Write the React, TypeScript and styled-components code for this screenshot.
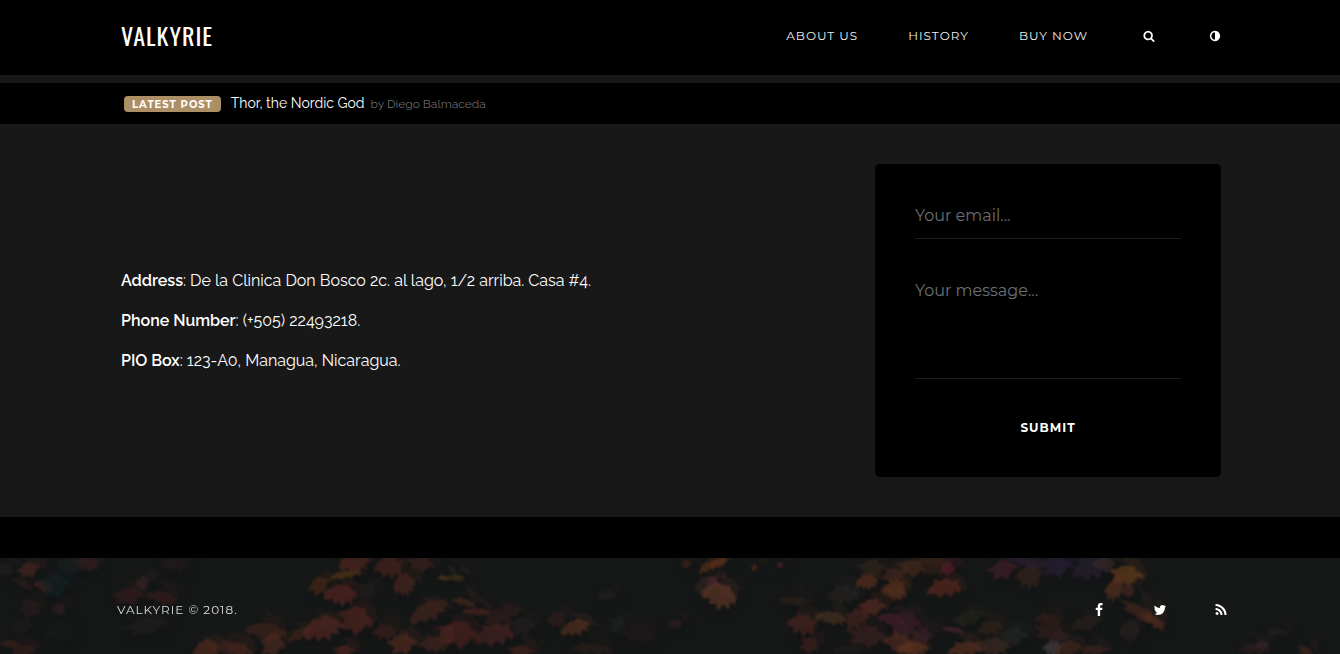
import React from "react";
import styled, { createGlobalStyle } from "styled-components";

const sans = `Montserrat, Inter, "Open Sans", sans-serif`;
const text = `Raleway, Lato, "Open Sans", sans-serif`;
const display = `Oswald, "Liberation Sans Narrow", sans-serif`;

const GlobalStyle = createGlobalStyle`
  *, *::before, *::after { box-sizing: border-box; }
  body {
    margin: 0;
    background: #181818;
    color: #fff;
    font-family: ${text};
    font-size: 16px;
    line-height: 24px;
    -webkit-font-smoothing: antialiased;
  }
  a { color: inherit; text-decoration: none; }
`;

const Header = styled.header`
  display: flex;
  align-items: center;
  justify-content: space-between;
  min-height: 75px;
  padding: 0 114px 4px 121px;
  background: #000;
`;

const Brand = styled.a`
  padding-bottom: 2px;
  font-family: ${display};
  font-size: 24px;
  line-height: 36px;
  letter-spacing: 1px;
`;

const Nav = styled.nav`
  display: flex;
  align-items: center;
  gap: 50px;
`;

const NavLink = styled.a`
  font-family: ${sans};
  font-size: 12px;
  line-height: 20px;
  letter-spacing: 1px;
  color: #eee;
`;

const Tools = styled.div`
  display: flex;
  gap: 44px;
`;

const IconButton = styled.button`
  display: flex;
  padding: 0 5px;
  border: 0;
  background: none;
  color: #fff;
  cursor: pointer;
`;

const IconLink = styled.a`
  display: flex;
`;

const LatestBar = styled.section`
  display: flex;
  align-items: center;
  min-height: 41px;
  margin-top: 8px;
  padding: 0 119px 0 124px;
  background: #000;
`;

const Badge = styled.span`
  margin-right: 10px;
  padding: 2px 8px 0;
  border-radius: 4px;
  background: #ad8f66;
  font-family: ${sans};
  font-size: 10px;
  font-weight: 700;
  line-height: 14px;
  letter-spacing: 1px;
`;

const PostLink = styled.a`
  padding-bottom: 2px;
  font-size: 14px;
  line-height: 20px;
`;

const Byline = styled.span`
  margin-left: 6px;
  font-size: 12px;
  line-height: 20px;
  color: #6a6a6a;
`;

const Main = styled.main`
  display: flex;
  align-items: center;
  justify-content: space-between;
  gap: 40px;
  padding: 40px 119px 40px 121px;
`;

const Contact = styled.address`
  display: flex;
  flex-direction: column;
  gap: 16px;
  font-style: normal;
`;

const Line = styled.p`
  margin: 0;
  strong { font-weight: 600; }
`;

const Card = styled.form`
  display: flex;
  flex-direction: column;
  gap: 40px;
  flex: 0 0 346px;
  padding: 40px;
  border-radius: 5px;
  background: #000;
`;

const Field = styled.input`
  display: block;
  width: 100%;
  height: 35px;
  padding: 0 0 12px;
  border: 0;
  border-bottom: 1px solid #1e1e1e;
  border-radius: 0;
  outline: 0;
  background: none;
  color: #fff;
  font: 400 16px/24px ${sans};
  resize: none;
  &::placeholder { color: #6c6f73; opacity: 1; }
`;

const MessageField = styled(Field)`
  height: 100px;
`;

const Submit = styled.button`
  align-self: center;
  padding: 0;
  border: 0;
  background: none;
  color: #fff;
  font: 700 12px/18px ${sans};
  letter-spacing: 1px;
  cursor: pointer;
`;

const Divider = styled.div`
  height: 41px;
  background: #000;
`;

const Footer = styled.footer`
  position: relative;
  display: flex;
  align-items: center;
  justify-content: space-between;
  padding: 42px 112px 34px 117px;
  background: #161818;
  overflow: hidden;
`;

const Backdrop = styled.svg`
  position: absolute;
  inset: 0;
  width: 100%;
  height: 100%;
`;

const Copyright = styled.small`
  position: relative;
  font-family: ${sans};
  font-size: 12px;
  line-height: 20px;
  letter-spacing: 1px;
  color: #ddd;
`;

const Social = styled.div`
  position: relative;
  display: flex;
  align-items: center;
  gap: 47px;
`;

const icons = {
  search:
    "M1216 832q0-185-131.5-316.5t-316.5-131.5-316.5 131.5-131.5 316.5 131.5 316.5 316.5 131.5 316.5-131.5 131.5-316.5zm512 832q0 52-38 90t-90 38q-54 0-90-38l-343-342q-179 124-399 124-143 0-273.5-55.5t-225-150-150-225-55.5-273.5 55.5-273.5 150-225 225-150 273.5-55.5 273.5 55.5 225 150 150 225 55.5 273.5q0 220-124 399l343 343q37 37 37 90z",
  adjust:
    "M896 1440v-1088q-148 0-273 73t-198 198-73 273 73 273 198 198 273 73zm768-544q0 209-103 385.5t-279.5 279.5-385.5 103-385.5-103-279.5-279.5-103-385.5 103-385.5 279.5-279.5 385.5-103 385.5 103 279.5 279.5 103 385.5z",
  facebook:
    "M1343 12v264h-157q-86 0-116 36t-30 108v189h293l-39 296h-254v759h-306v-759h-255v-296h255v-218q0-186 104-288.5t277-102.5q147 0 228 12z",
  twitter:
    "M1684 408q-67 98-162 167 1 14 1 42 0 130-38 259.5t-115.5 248.5-184.5 210.5-258 146-323 54.5q-271 0-496-145 35 4 78 4 225 0 401-138-105-2-188-64.5t-114-159.5q33 5 61 5 43 0 85-11-112-23-185.5-111.5t-73.5-205.5v-4q68 38 146 41-66-44-105-115t-39-154q0-88 44-163 121 149 294.5 238.5t371.5 99.5q-8-38-8-74 0-134 94.5-228.5t228.5-94.5q140 0 236 102 109-21 205-78-37 115-142 178 93-10 186-50z",
  rss: "M576 1344q0 80-56 136t-136 56-136-56-56-136 56-136 136-56 136 56 56 136zm512 123q2 28-17 48-18 21-47 21h-135q-25 0-43-16.5t-20-41.5q-22-229-184.5-391.5t-391.5-184.5q-25-2-41.5-20t-16.5-43v-135q0-29 21-47 17-17 43-17h5q160 13 306 80.5t259 181.5q114 113 181.5 259t80.5 306zm512 2q2 27-18 47-18 20-46 20h-143q-26 0-44.5-17.5t-19.5-42.5q-12-215-101-408.5t-231.5-336-336-231.5-408.5-102q-25-1-42.5-19.5t-17.5-43.5v-143q0-28 20-46 18-18 44-18h3q262 13 501.5 120t425.5 294q187 186 294 425.5t120 501.5z",
};

const Icon = ({ name, size }: { name: keyof typeof icons; size: number }) => (
  <svg width={size} height={size} viewBox="0 0 1792 1792" fill="currentColor" aria-hidden="true">
    <path d={icons[name]} />
  </svg>
);

// Drooping maple leaves: a broad back with lobes of different lengths below
const leafShapes = [
  "M-10 2Q-9-4-5-5Q-3-9 0-7Q4-10 6-5Q10-4 10 2L7 1L8 6L4 4L2 9L0 5L-4 7L-4 3L-8 5Z",
  "M-10-2L-5-4Q-3-8 1-7L4-8L5-4Q9-4 10 1L6 1Q6 5 3 6L3 9L-1 5Q-4 7-7 6L-5 2Z",
  "M-9 4Q-8-2-4-4L-5-8L-1-6Q3-9 5-5L9-6L8-2Q10 1 9 5L6 3L4 8L1 4L-2 8L-4 4Z",
];

// x, y, half width, half height, rotation, colour
const leaves: [number, number, number, number, number, string][] = [
  [4, 12, 9, 7, 20, "#22201e"],
  [28, 12, 11, 8, -15, "#4a2620"],
  [22, 25, 12, 5, 30, "#2a1f1c"],
  [44, 28, 9, 7, 20, "#3f2423"],
  [55, 27, 14, 14, 0, "#142123"],
  [86, 5, 12, 9, 10, "#3a2021"],
  [70, 8, 12, 9, 10, "#1a2020"],
  [30, 50, 11, 10, 40, "#2c1b1c"],
  [58, 51, 7, 7, 10, "#321f1f"],
  [60, 74, 14, 12, 0, "#161d1c"],
  [22, 68, 12, 10, 10, "#1c1c1b"],
  [10, 86, 11, 5, 10, "#3b211c"],
  [24, 93, 11, 6, -10, "#3a1e1b"],
  [128, 38, 16, 9, 0, "#351d1c"],
  [142, 25, 6, 9, 20, "#3d2424"],
  [162, 40, 14, 7, 15, "#371e1d"],
  [145, 68, 22, 9, -10, "#201e1c"],
  [174, 5, 14, 10, 0, "#241a1a"],
  [206, 93, 13, 11, -20, "#552c20"],
  [238, 92, 14, 8, 15, "#50291f"],
  [225, 89, 8, 9, 0, "#41231d"],
  [266, 74, 19, 9, 10, "#40251c"],
  [272, 87, 12, 13, 10, "#4e2a20"],
  [300, 76, 14, 6, -25, "#44241c"],
  [322, 71, 18, 13, -15, "#542721"],
  [355, 62, 17, 15, 15, "#50251f"],
  [384, 74, 12, 9, 10, "#3b201d"],
  [340, 37, 15, 11, 5, "#562621"],
  [319, 28, 11, 9, -30, "#4c2919"],
  [344, 17, 16, 4, -10, "#573818"],
  [354, 5, 14, 11, -10, "#51261f"],
  [366, 34, 10, 11, 30, "#231e1d"],
  [388, 9, 14, 12, 10, "#49241f"],
  [404, 27, 10, 12, -10, "#4c2820"],
  [420, 6, 13, 8, 10, "#3f211e"],
  [443, 20, 6, 3, 10, "#514021"],
  [428, 54, 19, 10, -25, "#44251e"],
  [402, 86, 14, 11, -5, "#552c20"],
  [432, 86, 13, 9, 10, "#442620"],
  [447, 78, 7, 12, 10, "#4a2822"],
  [344, 93, 11, 6, 0, "#53261f"],
  [463, 44, 12, 4, 15, "#4b2c1b"],
  [477, 54, 14, 4, 5, "#4c261f"],
  [458, 76, 20, 14, 10, "#4b2120"],
  [493, 77, 19, 12, -10, "#482322"],
  [503, 57, 17, 8, -20, "#2f1e1d"],
  [523, 68, 12, 10, 5, "#252020"],
  [556, 62, 9, 9, 10, "#351f1f"],
  [575, 70, 14, 8, -15, "#56301f"],
  [521, 93, 13, 6, 5, "#4a241f"],
  [590, 91, 21, 6, 5, "#2a201c"],
  [607, 38, 9, 6, 0, "#252121"],
  [617, 67, 8, 10, 20, "#1e2422"],
  [637, 75, 18, 11, 10, "#211a1a"],
  [456, 20, 8, 4, 5, "#41301b"],
  [686, 6, 5, 5, 0, "#482319"],
  [707, 9, 10, 5, -30, "#593017"],
  [719, 5, 9, 5, -30, "#67331b"],
  [712, 24, 6, 7, 25, "#592d35"],
  [703, 28, 8, 11, 10, "#332421"],
  [719, 38, 16, 13, 20, "#613627"],
  [754, 10, 3, 4, 10, "#5c2719"],
  [780, 7, 3, 4, 10, "#57202a"],
  [676, 66, 6, 5, 0, "#32201e"],
  [794, 43, 17, 5, 5, "#2d211b"],
  [801, 66, 14, 12, 20, "#4b2421"],
  [831, 60, 15, 7, 10, "#4a3020"],
  [809, 87, 9, 9, 30, "#43221f"],
  [843, 36, 16, 11, 0, "#272321"],
  [867, 24, 10, 8, 0, "#5d301e"],
  [871, 10, 14, 9, 0, "#32241c"],
  [892, 17, 10, 8, -10, "#462822"],
  [894, 34, 12, 9, 20, "#52291f"],
  [872, 49, 13, 9, 0, "#5b2b21"],
  [856, 61, 12, 10, -30, "#482521"],
  [892, 62, 13, 7, 15, "#4b1f30"],
  [866, 78, 20, 12, 10, "#392220"],
  [900, 74, 9, 11, 0, "#3a2028"],
  [850, 92, 15, 5, 0, "#231f1d"],
  [911, 10, 14, 9, 10, "#482a1b"],
  [894, 31, 11, 11, 0, "#50301a"],
  [932, 13, 9, 5, -10, "#332119"],
  [947, 10, 8, 7, 15, "#631d30"],
  [943, 30, 17, 10, -5, "#5b291f"],
  [934, 4, 16, 6, 0, "#3b231a"],
  [1002, 12, 14, 10, -10, "#431f29"],
  [1028, 18, 12, 14, 20, "#37241f"],
  [1026, 4, 16, 6, 20, "#2c2033"],
  [1056, 8, 15, 12, 0, "#272038"],
  [1089, 10, 18, 13, -10, "#282032"],
  [1104, 6, 10, 7, 0, "#3b2b24"],
  [1126, 17, 17, 10, 8, "#653d1c"],
  [1114, 30, 8, 15, 20, "#5b321e"],
  [1128, 33, 6, 7, 10, "#4c2723"],
  [1139, 54, 22, 7, 30, "#442720"],
  [1152, 62, 14, 6, 35, "#542e1e"],
  [1130, 73, 9, 12, 10, "#2b2220"],
  [968, 60, 17, 8, -15, "#25241a"],
  [989, 70, 13, 8, -10, "#34251b"],
  [953, 72, 10, 3, 10, "#512531"],
  [905, 65, 15, 13, 10, "#381d27"],
  [899, 85, 16, 10, 20, "#502c20"],
  [912, 91, 15, 8, 0, "#633720"],
  [922, 78, 10, 10, 10, "#3a2028"],
  [964, 91, 17, 8, -5, "#5c3020"],
  [992, 89, 16, 9, 0, "#402a23"],
  [1013, 78, 14, 10, 0, "#232826"],
  [1052, 90, 9, 9, 20, "#4a4242"],
  [1068, 91, 12, 8, -10, "#442820"],
  [1051, 75, 19, 9, 15, "#34201d"],
  [1047, 62, 13, 7, 15, "#331f1c"],
  [1085, 66, 14, 8, -15, "#2a201e"],
  [1093, 92, 16, 5, 0, "#42261e"],
  [1253, 91, 16, 6, 0, "#2d201e"],
  [1262, 87, 6, 5, 0, "#37262a"],
  [1305, 93, 8, 5, 25, "#46251d"],
  [1277, 74, 12, 4, 10, "#26201d"],
];

const Foliage = () => (
  <Backdrop viewBox="0 0 1340 96" preserveAspectRatio="xMidYMin slice" aria-hidden="true">
    <defs>
      <filter id="soft" x="-5%" y="-20%" width="110%" height="140%" colorInterpolationFilters="sRGB">
        <feGaussianBlur stdDeviation="0.8" />
      </filter>
      <filter id="shade" x="-5%" y="-20%" width="110%" height="140%" colorInterpolationFilters="sRGB">
        <feGaussianBlur stdDeviation="5" />
      </filter>
    </defs>
    <g filter="url(#shade)">
      {leaves.map(([x, y, w, h], i) => (
        <ellipse key={i} cx={x + 4} cy={y + 4} rx={w + 3} ry={h + 3} fill="#0f1112" opacity="0.4" />
      ))}
    </g>
    <g filter="url(#soft)">
      {leaves.map(([x, y, w, h, r, fill], i) => (
        <path
          key={`under-${i}`}
          d={leafShapes[(i + 1) % 3]}
          fill={fill}
          opacity="0.22"
          transform={`translate(${x + 9} ${y - 8}) rotate(${r + 40}) scale(${w / 10} ${h / 9})`}
        />
      ))}
      {leaves.map(([x, y, w, h, r, fill], i) => (
        <path
          key={i}
          d={leafShapes[i % 3]}
          fill={fill}
          opacity="0.66"
          transform={`translate(${x} ${y}) rotate(${r}) scale(${w / 9} ${h / 8})`}
        />
      ))}
    </g>
  </Backdrop>
);

export default function App() {
  return (
    <>
      <GlobalStyle />
      <Header>
        <Brand href="#">VALKYRIE</Brand>
        <Nav>
          <NavLink href="#about">ABOUT US</NavLink>
          <NavLink href="#history">HISTORY</NavLink>
          <NavLink href="#buy">BUY NOW</NavLink>
          <Tools>
            <IconButton type="button" aria-label="Search">
              <Icon name="search" size={12} />
            </IconButton>
            <IconButton type="button" aria-label="Toggle contrast">
              <Icon name="adjust" size={12} />
            </IconButton>
          </Tools>
        </Nav>
      </Header>
      <LatestBar>
        <Badge>LATEST POST</Badge>
        <PostLink href="#post">Thor, the Nordic God</PostLink>
        <Byline>by Diego Balmaceda</Byline>
      </LatestBar>
      <Main>
        <Contact>
          <Line><strong>Address</strong>: De la Clinica Don Bosco 2c. al lago, 1/2 arriba. Casa #4.</Line>
          <Line><strong>Phone Number</strong>: (+505) 22493218.</Line>
          <Line><strong>PIO Box</strong>: 123-A0, Managua, Nicaragua.</Line>
        </Contact>
        <Card onSubmit={(e: React.FormEvent) => e.preventDefault()}>
          <Field type="email" placeholder="Your email..." aria-label="Your email" />
          <MessageField as="textarea" placeholder="Your message..." aria-label="Your message" />
          <Submit type="submit">SUBMIT</Submit>
        </Card>
      </Main>
      <Divider />
      <Footer>
        <Foliage />
        <Copyright>VALKYRIE © 2018.</Copyright>
        <Social>
          <IconLink href="#facebook" aria-label="Facebook"><Icon name="facebook" size={14} /></IconLink>
          <IconLink href="#twitter" aria-label="Twitter"><Icon name="twitter" size={14} /></IconLink>
          <IconLink href="#rss" aria-label="RSS feed"><Icon name="rss" size={14} /></IconLink>
        </Social>
      </Footer>
    </>
  );
}
